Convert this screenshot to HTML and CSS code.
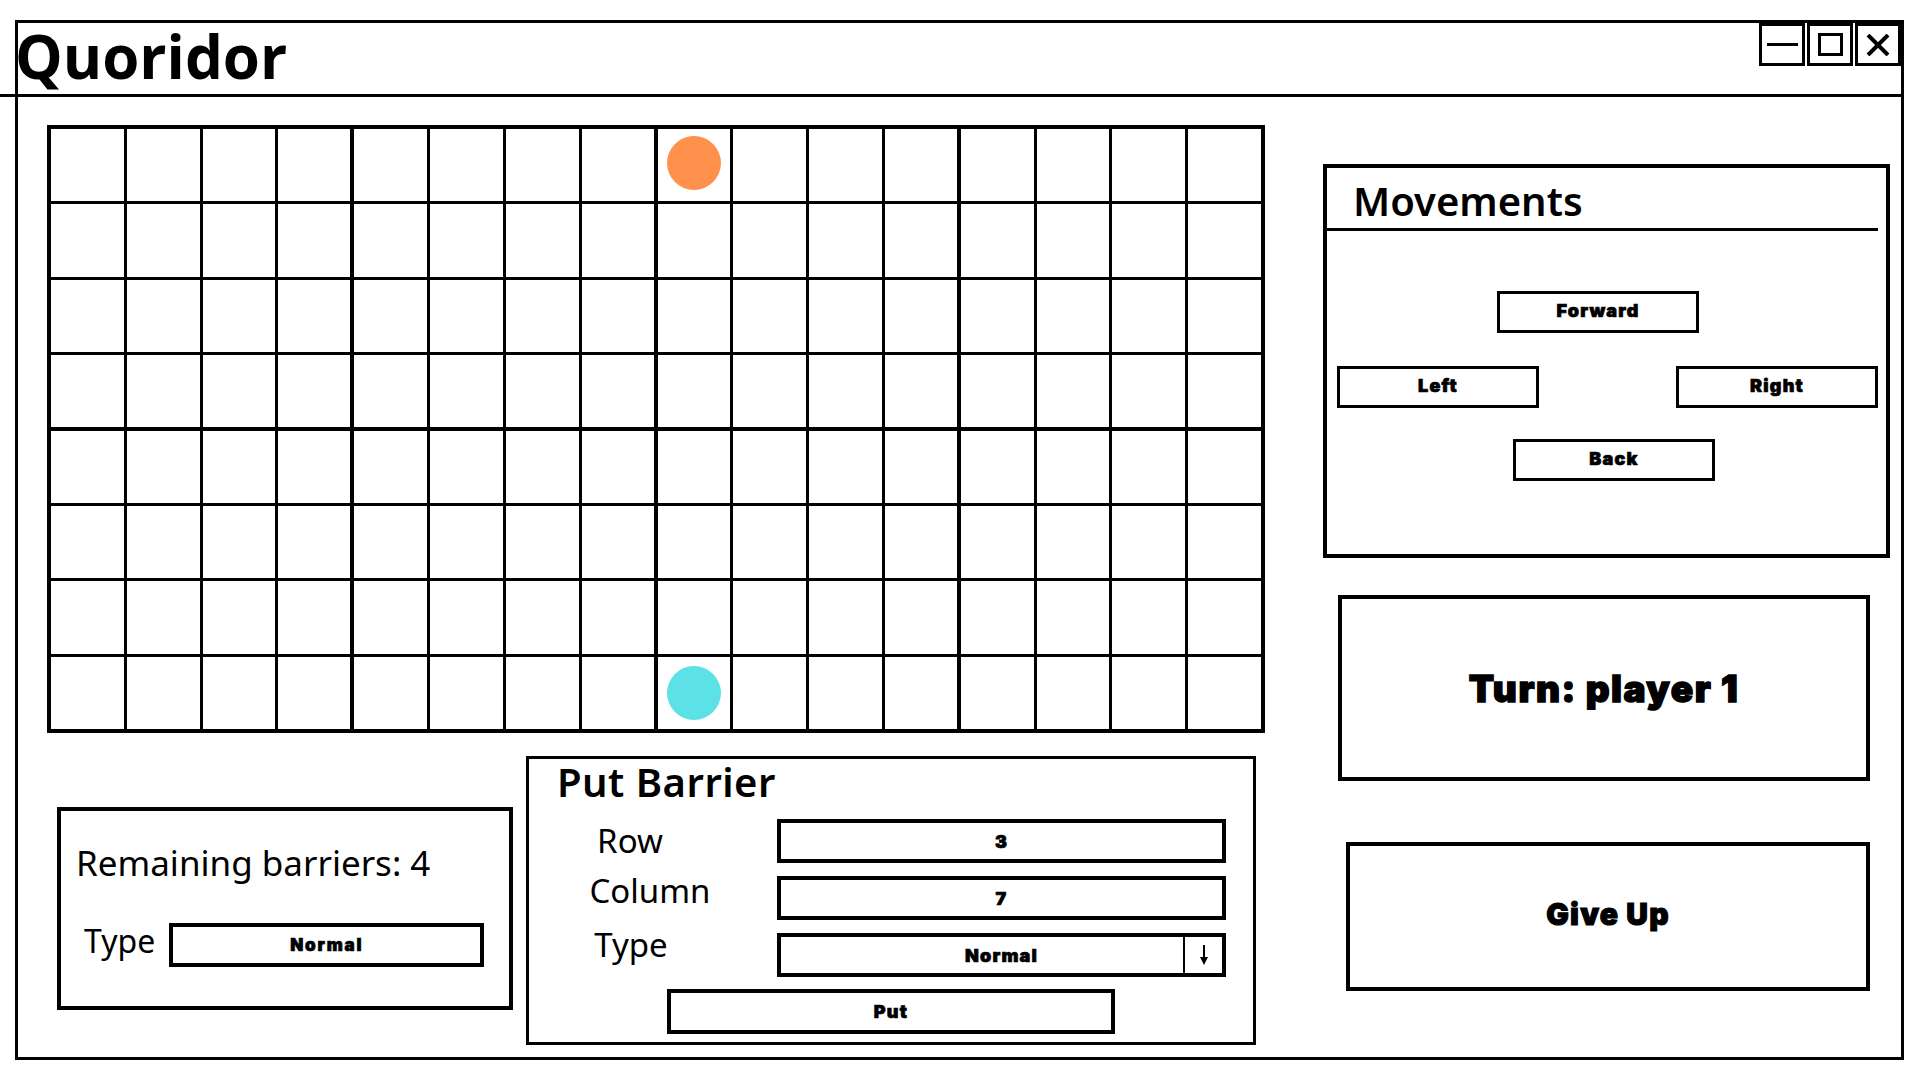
FILE: index.html
```html
<!DOCTYPE html>
<html lang="en">
<head>
    <meta charset="UTF-8">
    <meta name="viewport" content="width=device-width, initial-scale=1.0">
    <title>Quoridor</title>
    <link rel="stylesheet" href="styles.css">
</head>
<body>
    <div class="window">
        <div class="titlebar">
            <h1>Quoridor</h1>
            <div class="win-buttons">
                <div class="win-btn"><span class="minus"></span></div>
                <div class="win-btn"><span class="square"></span></div>
                <div class="win-btn">
                    <svg width="24" height="22" viewBox="0 0 24 22">
                        <path d="M2 1 L22 21 M22 1 L2 21" stroke="#000" stroke-width="4" fill="none"/>
                    </svg>
                </div>
            </div>
        </div>

        <div class="content">
            <div class="left">
                <div class="board" id="board"></div>

                <div class="bottom">
                    <div class="panel remaining">
                        <p class="remaining-text">Remaining barriers: 4</p>
                        <div class="type-row">
                            <span class="type-label">Type</span>
                            <div class="box type-box">Normal</div>
                        </div>
                    </div>

                    <div class="panel barrier">
                        <h2>Put Barrier</h2>
                        <div class="barrier-form">
                            <span class="lbl lbl-row">Row</span>
                            <div class="box field">3</div>
                            <span class="lbl lbl-column">Column</span>
                            <div class="box field">7</div>
                            <span class="lbl lbl-type">Type</span>
                            <div class="box field select">
                                <span class="select-value">Normal</span>
                                <span class="select-arrow">
                                    <svg width="12" height="22" viewBox="0 0 12 22">
                                        <path d="M6 1 V15" stroke="#000" stroke-width="2"/>
                                        <path d="M2 13 L10 13 L6 21 Z" fill="#000"/>
                                    </svg>
                                </span>
                            </div>
                        </div>
                        <div class="box put-btn">Put</div>
                    </div>
                </div>
            </div>

            <div class="right">
                <div class="panel movements">
                    <h2>Movements</h2>
                    <div class="moves">
                        <div class="move-row forward-row">
                            <div class="box move-btn">Forward</div>
                        </div>
                        <div class="move-row side-row">
                            <div class="box move-btn">Left</div>
                            <div class="box move-btn">Right</div>
                        </div>
                        <div class="move-row back-row">
                            <div class="box move-btn">Back</div>
                        </div>
                    </div>
                </div>

                <div class="panel turn">Turn: player 1</div>
                <div class="panel giveup">Give Up</div>
            </div>
        </div>
    </div>
    <script src="script.js"></script>
</body>
</html>
```

FILE: styles.css
```css
* {
    box-sizing: border-box;
}

body {
    margin: 0;
    background-color: #ffffff;
    font-family: "Noto Sans", "Open Sans", sans-serif;
    color: #000;
}

.window {
    margin: 20px 0 0 15px;
    width: 1889px;
    height: 1040px;
    border: 3px solid #000;
}

/* title bar */
.titlebar {
    display: flex;
    justify-content: space-between;
    align-items: flex-start;
    height: 74px;
    margin-left: -18px;
    padding-left: 15px;
    border-bottom: 3px solid #000;
}

.titlebar h1 {
    margin: 2px 0 0;
    font-family: "Open Sans", sans-serif;
    font-weight: 700;
    font-size: 60px;
    line-height: 62px;
}

.win-buttons {
    display: flex;
    gap: 2px;
}

.win-btn {
    width: 46px;
    height: 43px;
    border: 3px solid #000;
    display: flex;
    align-items: center;
    justify-content: center;
}

.minus {
    width: 31px;
    height: 3px;
    background-color: #000;
}

.square {
    width: 25px;
    height: 23px;
    border: 3px solid #000;
}

/* main area */
.content {
    display: flex;
    padding: 28px 10px 0 29px;
}

.board {
    width: 1218px;
    height: 608px;
    border: 4px solid #000;
    background-color: #000;
    display: grid;
    grid-template-columns: repeat(16, 1fr);
    grid-template-rows: repeat(8, 1fr);
    gap: 3px;
}

.cell {
    background-color: #fff;
    display: flex;
    align-items: center;
    justify-content: center;
}

.cell.edge-right {
    margin-right: 1px;
}

.cell.edge-bottom {
    margin-bottom: 1px;
}

.piece {
    width: 54px;
    height: 54px;
    border-radius: 50%;
}

.piece.orange {
    background-color: #ff914d;
    margin-top: -5px;
}

.piece.cyan {
    background-color: #5ce1e6;
}

.panel {
    border: 4px solid #000;
}

.box {
    border: 4px solid #000;
    display: flex;
    align-items: center;
    justify-content: center;
    font-family: "Inter", sans-serif;
    font-weight: 900;
    font-size: 18px;
    letter-spacing: 1.2px;
    -webkit-text-stroke: 0.7px #000;
}

/* bottom panels */
.bottom {
    display: flex;
    align-items: flex-start;
}

.remaining {
    margin: 74px 0 0 10px;
    width: 456px;
    height: 203px;
}

.remaining-text {
    margin: 0;
    padding: 31px 0 0 15px;
    font-size: 35px;
    line-height: 42px;
}

.type-row {
    display: flex;
    align-items: center;
    gap: 14px;
    margin-top: 39px;
    padding-left: 23px;
}

.type-label {
    font-size: 32px;
    line-height: 36px;
    margin-bottom: 8px;
}

.type-box {
    width: 315px;
    height: 44px;
    font-size: 17px;
    letter-spacing: 1.8px;
}

.barrier {
    margin: 23px 0 0 13px;
    width: 730px;
    height: 289px;
    border-width: 3px;
}

.barrier h2 {
    margin: 0;
    padding-left: 28px;
    font-size: 40px;
    font-weight: 600;
    line-height: 46px;
    letter-spacing: 0.5px;
}

.barrier-form {
    display: grid;
    grid-template-columns: 222px 449px;
    column-gap: 26px;
    row-gap: 13px;
    align-items: center;
    margin-top: 14px;
}

.lbl {
    text-align: center;
    font-size: 33px;
    line-height: 24px;
}

.lbl-row {
    padding-right: 20px;
}

.lbl-column {
    padding-left: 20px;
    margin-bottom: 14px;
}

.lbl-type {
    padding-right: 18px;
    margin-bottom: 20px;
}

.field {
    height: 44px;
}

.select {
    justify-content: flex-start;
}

.select-value {
    flex: 1;
    text-align: center;
    margin-left: 39px;
}

.select-arrow {
    width: 39px;
    height: 100%;
    border-left: 2px solid #000;
    display: flex;
    align-items: center;
    justify-content: center;
}

.put-btn {
    width: 448px;
    height: 45px;
    margin: 12px auto 0;
}

/* right column */
.right {
    display: flex;
    flex-direction: column;
    align-items: flex-start;
    margin-left: 58px;
}

.movements {
    margin-top: 39px;
    width: 567px;
    height: 394px;
}

.movements h2 {
    margin: 0 8px 0 0;
    padding: 9px 0 3px 26px;
    border-bottom: 3px solid #000;
    font-size: 40px;
    font-weight: 600;
    line-height: 48px;
}

.moves {
    padding-top: 60px;
}

.move-row {
    display: flex;
}

.forward-row {
    padding-left: 170px;
}

.side-row {
    justify-content: space-between;
    margin-top: 33px;
    padding: 0 8px 0 10px;
}

.back-row {
    margin-top: 31px;
    padding-left: 186px;
}

.move-btn {
    width: 202px;
    height: 42px;
    border-width: 3px;
    padding-bottom: 3px;
}

.turn,
.giveup {
    display: flex;
    align-items: center;
    justify-content: center;
    font-family: "Inter", sans-serif;
    font-weight: 900;
}

.turn {
    margin: 37px 0 0 15px;
    width: 532px;
    height: 186px;
    font-size: 37px;
    letter-spacing: 1.5px;
    -webkit-text-stroke: 1.4px #000;
}

.giveup {
    margin: 61px 0 0 23px;
    width: 524px;
    height: 149px;
    padding-bottom: 6px;
    font-size: 30px;
    letter-spacing: 1.2px;
    -webkit-text-stroke: 1.1px #000;
}
```

FILE: script.js
```js
// build the 16 x 8 board
const board = document.getElementById('board');

for (let r = 0; r < 8; r++) {
    for (let c = 0; c < 16; c++) {
        const cell = document.createElement('div');
        cell.className = 'cell';
        if (c % 4 === 3 && c < 15) cell.classList.add('edge-right');
        if (r === 3) cell.classList.add('edge-bottom');

        if (c === 8 && r === 0) {
            const p = document.createElement('div');
            p.className = 'piece orange';
            cell.appendChild(p);
        }
        if (c === 8 && r === 7) {
            const p = document.createElement('div');
            p.className = 'piece cyan';
            cell.appendChild(p);
        }
        board.appendChild(cell);
    }
}
```
